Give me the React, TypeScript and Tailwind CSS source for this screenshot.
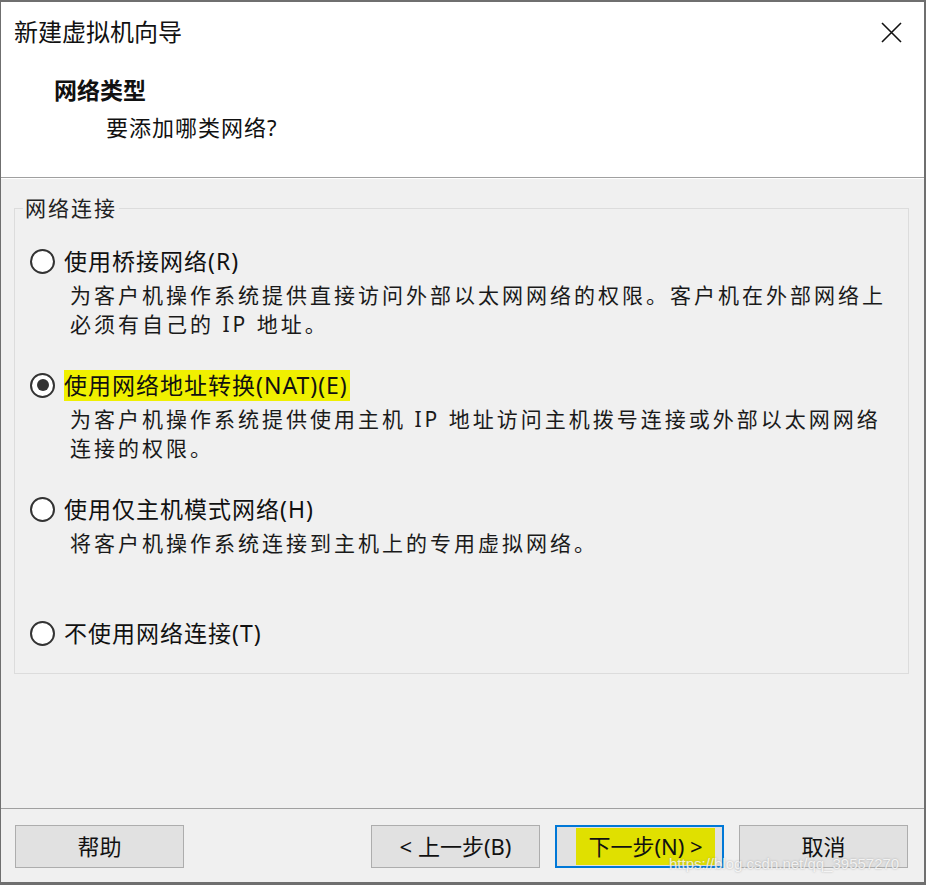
const FONT = '"Noto Sans", "Noto Sans CJK SC", sans-serif';

interface OptionProps {
  label: string;
  lines: string[];
  checked?: boolean;
  highlight?: boolean;
}

function Radio({ checked }: { checked?: boolean }) {
  return (
    <span className="w-[25px] h-[25px] rounded-full border-2 border-[#333333] bg-white flex items-center justify-center flex-shrink-0">
      {checked && <span className="w-[12px] h-[12px] rounded-full bg-[#333333]" />}
    </span>
  );
}

function Option({ label, lines, checked, highlight }: OptionProps) {
  return (
    <div className="flex flex-col">
      <div className="h-[34px] flex items-center">
        <Radio checked={checked} />
        <span
          className={`ml-[9px] text-[23px] tracking-[1px] leading-[31px] text-[#111111] ${
            highlight ? 'bg-[#f0f000] pr-[2px]' : ''
          }`}
        >
          {label}
        </span>
      </div>
      <div className="mt-[3px] pl-[40px] text-[21px] tracking-[3px] leading-[29px] text-[#1a1a1a]">
        {lines.map((l, i) => (
          <div key={i} className="h-[29px] whitespace-pre">
            {l}
          </div>
        ))}
      </div>
    </div>
  );
}

function Button({ children, focused }: { children: React.ReactNode; focused?: boolean }) {
  return (
    <button
      className={`w-[169px] h-[43px] bg-[#e1e1e1] flex items-center justify-center text-[22px] text-[#111111] ${
        focused ? 'border-2 border-[#0078d7]' : 'border border-[#adadad]'
      }`}
    >
      {children}
    </button>
  );
}

export default function App() {
  return (
    <div
      className="relative w-[926px] h-[885px] flex flex-col bg-[#f0f0f0] border-l border-t-2 border-r-2 border-b-[3px] border-[#6f6f6f] overflow-hidden"
      style={{ fontFamily: FONT }}
    >
      {/* Header */}
      <div className="h-[175px] bg-white flex flex-col pl-[13px] pr-[22px] pt-[15px]">
        <div className="flex items-center justify-between h-[30px]">
          <span className="text-[24px] leading-[30px] text-[#111111]">新建虚拟机向导</span>
          <svg width="21" height="21" viewBox="0 0 21 21" className="mt-[1px]">
            <path d="M1 1L20 20M20 1L1 20" stroke="#111111" strokeWidth="1.6" fill="none" />
          </svg>
        </div>
        <div className="mt-[28px] ml-[40px] text-[23px] leading-[30px] font-semibold text-[#111111]">
          网络类型
        </div>
        <div className="mt-[7px] ml-[92px] text-[22px] tracking-[1px] leading-[30px] text-[#111111]">
          要添加哪类网络?
        </div>
      </div>
      <div className="h-px bg-[#a0a0a0]" />
      <div className="h-px bg-white" />

      {/* Body */}
      <div className="flex-1 pt-[15px] pl-[13px] pr-[15px]">
        <fieldset className="border border-[#dcdcdc] pl-[15px] pt-[22px] pb-[23px]">
          <legend className="-ml-[7px] px-[2px] text-[21px] tracking-[2px] leading-[28px] text-[#222222]">
            网络连接
          </legend>
          <div className="flex flex-col gap-[29px]">
            <Option
              label="使用桥接网络(R)"
              lines={['为客户机操作系统提供直接访问外部以太网网络的权限。客户机在外部网络上', '必须有自己的 IP 地址。']}
            />
            <Option
              label="使用网络地址转换(NAT)(E)"
              checked
              highlight
              lines={['为客户机操作系统提供使用主机 IP 地址访问主机拨号连接或外部以太网网络', '连接的权限。']}
            />
            <Option label="使用仅主机模式网络(H)" lines={['将客户机操作系统连接到主机上的专用虚拟网络。', '']} />
            <div className="h-[34px] flex items-center">
              <Radio />
              <span className="ml-[9px] text-[23px] tracking-[1px] leading-[31px] text-[#111111]">
                不使用网络连接(T)
              </span>
            </div>
          </div>
        </fieldset>
      </div>

      {/* Footer */}
      <div className="h-px bg-[#a0a0a0]" />
      <div className="h-[73px] flex items-start pt-[16px] pl-[14px] pr-[16px]">
        <Button>帮助</Button>
        <div className="flex-1" />
        <div className="flex gap-[15px]">
          <Button>&lt; 上一步(B)</Button>
          <Button focused>
            <span className="bg-[#e0e000] h-[37px] w-[139px] ml-[12px] flex items-center justify-center">下一步(N) &gt;</span>
          </Button>
          <Button>取消</Button>
        </div>
      </div>

      {/* Watermark */}
      <div
        className="absolute left-[668px] top-[852px] text-[15px] leading-[20px] text-white/80"
        style={{ fontFamily: '"Liberation Sans", sans-serif', textShadow: '0 0 2px rgba(120,120,120,0.6)' }}
      >
        https://blog.csdn.net/qq_39557270
      </div>
    </div>
  );
}
